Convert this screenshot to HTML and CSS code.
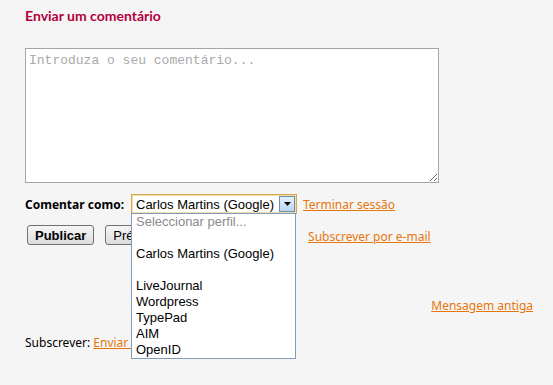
FILE: index.html
```html
<!DOCTYPE html>
<html lang="pt">

<head>
  <meta charset="UTF-8">
  <title>Enviar um comentário</title>
  <link rel="stylesheet" href="styles.css">
</head>

<body>
  <div class="page">
    <h2 class="title">Enviar um comentário</h2>
    <textarea class="comment" placeholder="Introduza o seu comentário..."></textarea>

    <div class="identity">
      <span class="label">Comentar como:</span>
      <div class="picker">
        <div class="select">
          <span class="current">Carlos Martins (Google)</span>
          <span class="arrow">
            <svg width="7" height="4" viewBox="0 0 7 4"><path d="M0 0h7L3.5 4z" fill="#000"/></svg>
          </span>
        </div>
        <ul class="options">
          <li class="hint">Seleccionar perfil...</li>
          <li></li>
          <li>Carlos Martins (Google)</li>
          <li></li>
          <li>LiveJournal</li>
          <li>Wordpress</li>
          <li>TypePad</li>
          <li>AIM</li>
          <li>OpenID</li>
        </ul>
      </div>
      <a href="#" class="link logout">Terminar sessão</a>
    </div>

    <div class="actions">
      <button class="btn">Publicar</button>
      <button class="btn">Pré-visualizar</button>
      <a href="#" class="link mail">Subscrever por e-mail</a>
    </div>

    <div class="older"><a href="#" class="link">Mensagem antiga</a></div>

    <div class="feed">Subscrever: <a href="#" class="link">Enviar comentários (Atom)</a></div>
  </div>
</body>

</html>
```

FILE: styles.css
```css
body {
  margin: 0;
  background: #f5f5f5;
  font-family: "Noto Sans", "DejaVu Sans", sans-serif;
  font-size: 12px;
  color: #000;
}

.page {
  padding: 6px 0 40px 25px;
}

/* heading */
.title {
  margin: 0;
  font-family: Lato, "Noto Sans", sans-serif;
  font-size: 14px;
  font-weight: bold;
  color: #b1003c;
  height: 20px;
  line-height: 20px;
}

.comment {
  display: block;
  box-sizing: border-box;
  margin-top: 22px;
  width: 414px;
  height: 135px;
  border: 1px solid #a5a5a5;
  background: #fff;
  padding: 4px 3px;
  font-family: "Liberation Mono", monospace;
  font-size: 13px;
}

.comment::placeholder {
  color: #a9a9a9;
}

.identity {
  display: flex;
  align-items: center;
  margin-top: 11px;
  height: 20px;
}

.label {
  font-weight: bold;
  width: 106px;
}

.picker {
  position: relative;
  width: 166px;
}

.select {
  box-sizing: border-box;
  height: 20px;
  border: 1px solid #d6a653;
  box-shadow: inset 0 0 0 1px #f1dcae;
  background: #fff;
  display: flex;
  align-items: center;
  font-family: "Liberation Sans", Arial, sans-serif;
  font-size: 13px;
  padding-left: 4px;
}

.current {
  flex: 1;
}

.arrow {
  width: 16px;
  height: 16px;
  margin-right: 1px;
  border: 1px solid #6d8eae;
  box-sizing: border-box;
  background: linear-gradient(#e4f0fb, #b9d7f2);
  display: flex;
  align-items: center;
  justify-content: center;
}

.options {
  position: absolute;
  top: 19px;
  left: 0;
  width: 165px;
  height: 146px;
  box-sizing: border-box;
  margin: 0;
  padding: 0;
  list-style: none;
  background: #fff;
  border: 1px solid #7f9db9;
  font-family: "Liberation Sans", Arial, sans-serif;
  font-size: 13px;
  z-index: 2;
}

.options li {
  height: 16px;
  line-height: 16px;
  padding-left: 4px;
}

.options .hint {
  color: #8a8a8a;
}

.link {
  color: #e6760c;
  text-decoration: underline;
}

.logout {
  margin-left: 6px;
}

.actions {
  display: flex;
  align-items: center;
  margin-top: 11px;
  height: 20px;
}

.btn {
  height: 20px;
  margin-left: 2px;
  margin-right: 9px;
  padding: 0 7px;
  border: 1px solid #707070;
  border-radius: 3px;
  background: linear-gradient(#f6f6f6, #dcdcdc);
  font-family: "Liberation Sans", Arial, sans-serif;
  font-size: 13px;
  font-weight: bold;
}

.btn + .btn {
  font-weight: normal;
}

.mail {
  margin-left: 99px;
  margin-top: 2px;
}

.older {
  text-align: right;
  padding-right: 20px;
  margin-top: 52px;
}

.feed {
  margin-top: 20px;
}
```
